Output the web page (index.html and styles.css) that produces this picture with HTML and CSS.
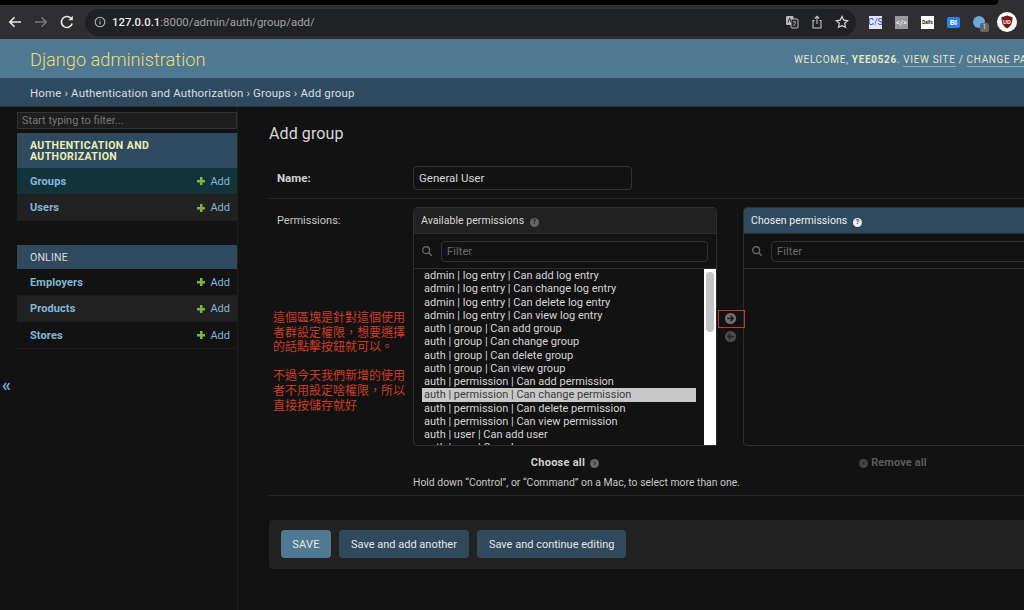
FILE: index.html
```html
<!DOCTYPE html>
<html lang="en">
<head>
<meta charset="utf-8">
<title>Add group | Django site admin</title>
<link rel="stylesheet" href="styles.css">
</head>
<body>
<div class="tabstrip"><div class="tabstrip-black"></div></div>
<div class="toolbar">
  <svg class="nav-ico" viewBox="0 0 16 16"><path d="M14 8H3M7.5 3.2 2.8 8l4.700 4.800" fill="none" stroke="#e8e8e8" stroke-width="1.600"/></svg>
  <svg class="nav-ico" viewBox="0 0 16 16"><path d="M2 8h11M8.500 3.200 13.200 8l-4.700 4.800" fill="none" stroke="#77797b" stroke-width="1.600"/></svg>
  <svg class="nav-ico" viewBox="0 0 16 16"><path d="M13.200 9.500A5.500 5.500 0 1 1 12 4.300" fill="none" stroke="#e8e8e8" stroke-width="1.600"/><path d="M13.800 1.800v4.400H9.400z" fill="#e8e8e8"/></svg>
  <div class="omnibox">
    <svg class="info-ico" viewBox="0 0 12 12"><circle cx="6" cy="6" r="4.800" fill="none" stroke="#b5b5b5" stroke-width="1.100"/><path d="M6 5.300v3.200M6 3.300v1" stroke="#b5b5b5" stroke-width="1.100"/></svg>
    <span class="url"><span class="url-host">127.0.0.1</span>:8000/admin/auth/group/add/</span>
    <div class="omni-actions">
      <svg class="omni-ico" viewBox="0 0 14 14"><rect x="1" y="1" width="7.500" height="9" rx="1" fill="#b8b8b8"/><rect x="6" y="4" width="7" height="9" rx="1" fill="#2a2a2c" stroke="#b8b8b8"/><path d="M8 7h3M9.500 6v1M8.500 11l2-3" stroke="#b8b8b8" fill="none" stroke-width=".8"/><path d="M3 7.500 4.700 3l1.500 4.500" stroke="#333" fill="none"/></svg>
      <svg class="omni-ico" viewBox="0 0 14 14"><path d="M4.500 5.500H3v7.500h8V5.500H9.500" fill="none" stroke="#c4c4c4" stroke-width="1.100"/><path d="M7 9V1.500M4.800 3.500 7 1.300l2.200 2.200" fill="none" stroke="#c4c4c4" stroke-width="1.100"/></svg>
      <svg class="omni-ico" viewBox="0 0 14 14"><path d="m7 1.500 1.700 3.600 3.900.5-2.900 2.700.8 3.900L7 10.700l-3.500 1.500.8-3.900L1.400 5.600l3.900-.5z" fill="none" stroke="#d6d6d6" stroke-width="1.200"/></svg>
    </div>
  </div>
  <div class="extensions">
    <span class="ext ext-cjs">C/S</span>
    <span class="ext ext-code">&lt;/&gt;</span>
    <span class="ext ext-dark">Dalfs</span>
    <span class="ext-bi">BI</span>
    <span class="ext-globe"><span class="ext-badge">1</span></span>
    <span class="ext-ublock"><svg viewBox="0 0 14 16" class="shield"><path d="M7 .5 13.500 2.500c0 6-1.500 10.500-6.500 13C2 13 .5 8.500.5 2.500z" fill="#7f1414"/></svg><span class="ud">UD</span></span>
    <span class="ext-dot"></span>
  </div>
</div>

<header class="site-header">
  <div class="branding">Django administration</div>
  <div class="user-tools">WELCOME, <strong>YEE0526</strong>. <a>VIEW SITE</a> / <a>CHANGE PASSWORD</a></div>
</header>
<nav class="breadcrumbs">Home › Authentication and Authorization › Groups › Add group</nav>

<div class="main">
  <aside class="sidebar">
    <div class="nav-filter">Start typing to filter...</div>
    <div class="app-caption app-caption-active">AUTHENTICATION AND AUTHORIZATION</div>
    <div class="model-row model-current"><span class="model-name">Groups</span><span class="add-link"><span class="plus"></span>Add</span></div>
    <div class="model-row model-alt"><span class="model-name">Users</span><span class="add-link"><span class="plus"></span>Add</span></div>
    <div class="app-caption app-caption-plain">ONLINE</div>
    <div class="model-row"><span class="model-name">Employers</span><span class="add-link"><span class="plus"></span>Add</span></div>
    <div class="model-row model-alt"><span class="model-name">Products</span><span class="add-link"><span class="plus"></span>Add</span></div>
    <div class="model-row"><span class="model-name">Stores</span><span class="add-link"><span class="plus"></span>Add</span></div>
    <div class="sidebar-toggle">«</div>
  </aside>

  <main class="content">
    <h1 class="page-title">Add group</h1>
    <div class="form-row name-row">
      <label class="name-label">Name:</label>
      <div class="name-input">General User</div>
    </div>
    <div class="form-row perm-row">
      <label class="perm-label">Permissions:</label>
      <div class="perm-body">
        <div class="selector">
          <div class="selector-box">
            <div class="selector-head">Available permissions <span class="help">?</span></div>
            <div class="selector-filter">
              <svg class="search-ico" viewBox="0 0 14 14"><circle cx="6" cy="6" r="4" fill="none" stroke="#666" stroke-width="1.600"/><path d="m9 9 3.500 3.500" stroke="#666" stroke-width="1.800"/></svg>
              <div class="filter-input">Filter</div>
            </div>
            <div class="list-wrap">
              <ul class="options">
                <li>admin | log entry | Can add log entry</li>
                <li>admin | log entry | Can change log entry</li>
                <li>admin | log entry | Can delete log entry</li>
                <li>admin | log entry | Can view log entry</li>
                <li>auth | group | Can add group</li>
                <li>auth | group | Can change group</li>
                <li>auth | group | Can delete group</li>
                <li>auth | group | Can view group</li>
                <li>auth | permission | Can add permission</li>
                <li class="selected">auth | permission | Can change permission</li>
                <li>auth | permission | Can delete permission</li>
                <li>auth | permission | Can view permission</li>
                <li>auth | user | Can add user</li>
                <li>auth | user | Can change user</li>
              </ul>
              <div class="scrollbar"><div class="scroll-thumb"></div></div>
            </div>
          </div>
          <div class="arrows">
            <span class="arrow-btn arrow-on"><svg viewBox="0 0 14 14"><circle cx="7" cy="7" r="6" fill="#6f6f6f"/><path d="M3.500 7h6M7 4l3 3-3 3" fill="none" stroke="#1c1c1c" stroke-width="1.500"/></svg></span>
            <span class="arrow-btn arrow-off"><svg viewBox="0 0 14 14"><circle cx="7" cy="7" r="6" fill="#4c4c4c"/><path d="M10.500 7h-6M7 4 4 7l3 3" fill="none" stroke="#222" stroke-width="1.500"/></svg></span>
          </div>
          <div class="selector-box selector-chosen">
            <div class="selector-head chosen-head">Chosen permissions <span class="help help-on">?</span></div>
            <div class="selector-filter">
              <svg class="search-ico" viewBox="0 0 14 14"><circle cx="6" cy="6" r="4" fill="none" stroke="#666" stroke-width="1.600"/><path d="m9 9 3.500 3.500" stroke="#666" stroke-width="1.800"/></svg>
              <div class="filter-input">Filter</div>
            </div>
            <div class="chosen-list"></div>
          </div>
        </div>
        <div class="choose-row">
          <span class="choose-all">Choose all <span class="mini-dot">›</span></span>
          <span class="remove-all"><span class="mini-dot mini-off">‹</span> Remove all</span>
        </div>
        <p class="help-text">Hold down “Control”, or “Command” on a Mac, to select more than one.</p>
      </div>
      <div class="note">這個區塊是針對這個使用<br>者群設定權限，想要選擇<br>的話點擊按鈕就可以。<br><br>不過今天我們新增的使用<br>者不用設定啥權限，所以<br>直接按儲存就好</div>
      <div class="red-box"></div>
    </div>
    <div class="submit-row">
      <button class="btn btn-save">SAVE</button>
      <button class="btn">Save and add another</button>
      <button class="btn">Save and continue editing</button>
    </div>
  </main>
</div>
</body>
</html>
```
FILE: styles.css
```css
* { box-sizing: border-box; }
html, body { margin: 0; height: 610px; overflow: hidden; }
body { width: 1024px; background: #121212; color: #ddd; font-family: Roboto, "Liberation Sans", sans-serif; font-size: 12px; }

.tabstrip { height: 5px; background: #2e2e30; }
.tabstrip-black { width: 998px; height: 5px; background: #000; border-bottom-right-radius: 4px; }
.toolbar { height: 34px; background: #2f2f31; display: flex; align-items: center; padding-left: 7px; }
.nav-ico { width: 16px; height: 16px; margin-right: 10px; flex: none; }
.omnibox { width: 771px; height: 27px; border-radius: 14px; background: #202124; display: flex; align-items: center; padding: 0 7px 0 9px; flex: none; }
.info-ico { width: 12px; height: 12px; margin-right: 6px; }
.url { font-size: 11.400px; color: #a0a2a4; }
.url-host { color: #eceded; font-weight: 500; }
.omni-actions { margin-left: auto; display: flex; gap: 11px; }
.omni-ico { width: 14px; height: 14px; }
.extensions { display: flex; align-items: center; margin-left: 13px; flex: none; }
.ext { width: 13px; height: 13px; margin-right: 13px; display: flex; align-items: center; justify-content: center; font-size: 8px; overflow: hidden; }
.ext-cjs { background: #dfe6f5; color: #3a44d8; font-size: 9px; }
.ext-code { background: #9a9a9e; color: #fff; }
.ext-dark { background: #fff; color: #111; font-size: 4.500px; font-weight: 700; }
.ext-bi { width: 13px; height: 11px; margin-right: 13px; border-radius: 2px; background: #2f80e8; color: #fff; font-size: 8px; font-weight: 700; text-align: center; line-height: 11px; }
.ext-globe { position: relative; width: 12px; height: 12px; margin-right: 12px; border-radius: 50%; background: #6ea7e0; }
.ext-badge { position: absolute; left: 7px; top: 7px; width: 9px; height: 9px; border-radius: 2px; background: #666; color: #ddd; font-size: 7px; line-height: 9px; text-align: center; }
.ext-ublock { position: relative; width: 20px; height: 20px; margin-right: 9px; border-radius: 50%; background: #fff; display: flex; align-items: center; justify-content: center; }
.shield { width: 12px; height: 14px; }
.ud { position: absolute; left: 0; right: 0; top: 6px; text-align: center; font-size: 6px; color: #eee; font-weight: 700; }
.ext-dot { width: 4px; height: 4px; border-radius: 50%; background: #ccc; flex: none; }

.site-header { height: 39px; background: #4f7893; display: flex; align-items: center; padding: 2px 0 0 30px; white-space: nowrap; overflow: hidden; }
.branding { font-size: 18.200px; font-weight: 300; color: #f0dc6e; }
.user-tools { margin-left: auto; flex: none; width: 230px; font-size: 10px; line-height: 18px; letter-spacing: .66px; color: #e6e7c4; overflow: hidden; }
.user-tools strong { font-weight: 700; }
.user-tools a { border-bottom: 1px solid #8fa9ba; padding-bottom: 1px; }
.breadcrumbs { height: 29px; background: #2f4a5e; border-bottom: 1px solid #26333d; padding-left: 30px; line-height: 30px; font-size: 11.500px; letter-spacing: .14px; color: #d5dde2; }

.main { display: flex; height: 503px; }
.sidebar { position: relative; width: 238px; flex: none; padding: 5px 0 0 17px; border-right: 1px solid #1f1f1f; }
.nav-filter { height: 17px; width: 220px; background: #1e1e1e; border: 1px solid #333; color: #777; font-size: 11px; line-height: 15px; padding-left: 4px; margin-bottom: 4px; }
.app-caption { width: 220px; background: #2f4a5e; padding: 0 13px; font-size: 10.500px; letter-spacing: .4px; }
.app-caption-active { height: 35px; padding-top: 7px; line-height: 11px; font-weight: 700; color: #eeeeb4; }
.app-caption-plain { height: 24px; margin-top: 24px; line-height: 25px; color: #ddd; font-weight: 400; letter-spacing: .2px; }
.model-row { width: 220px; height: 26.500px; display: flex; align-items: center; justify-content: space-between; padding: 1px 7px 0 13px; font-size: 11px; border-bottom: 1px solid #1c1c1c; }
.model-alt { background: #212121; }
.model-current { background: #13333a; }
.model-name { font-weight: 700; color: #81b7dc; letter-spacing: .1px; }
.add-link { display: flex; align-items: center; color: #81b7dc; }
.plus { width: 8px; height: 8px; margin-right: 5px; background: linear-gradient(#7fb53f, #7fb53f) center / 8px 2.500px no-repeat, linear-gradient(#7fb53f, #7fb53f) center / 2.500px 8px no-repeat; }
.sidebar-toggle { position: absolute; left: 2px; top: 266px; color: #6ea6cf; font-size: 18px; font-weight: 700; line-height: 24px; }

.content { flex: none; width: 790px; padding: 17px 0 0 31px; }
.page-title { margin: 0 0 22px; font-size: 16px; font-weight: 400; line-height: 20px; color: #d8d8d8; letter-spacing: .1px; }
.form-row { display: flex; }
.name-row { height: 33px; padding-left: 8px; border-bottom: 1px solid #262626; }
.name-label { width: 136px; flex: none; font-weight: 700; font-size: 11.500px; color: #d2d2d2; line-height: 24px; }
.name-input { width: 219px; height: 24px; border: 1px solid #333; border-radius: 4px; background: #121212; padding-left: 5px; line-height: 22px; font-size: 11.500px; color: #d8d8d8; }
.perm-row { position: relative; padding: 8px 0 0 8px; height: 297px; border-bottom: 1px solid #262626; }
.perm-label { width: 136px; flex: none; font-size: 11px; color: #c8c8c8; padding-top: 7px; }
.perm-body { flex: none; width: 640px; }
.selector { display: flex; height: 239px; }
.selector-box { width: 304px; flex: none; border: 1px solid #2e2e2e; border-radius: 4px 4px 0 4px; display: flex; flex-direction: column; overflow: hidden; }
.selector-chosen { width: 310px; }
.selector-head { height: 26px; flex: none; background: #212121; padding-left: 7px; line-height: 25px; font-size: 10.500px; letter-spacing: .05px; color: #d8d8d8; border-bottom: 1px solid #2e2e2e; }
.chosen-head { background: #2f4a5e; color: #eee; }
.help { display: inline-block; width: 9px; height: 9px; margin-left: 3px; border-radius: 50%; background: #666; color: #222; font-size: 7px; line-height: 9px; text-align: center; font-weight: 700; vertical-align: 0; }
.help-on { background: #eee; color: #2f4a5e; }
.selector-filter { height: 35px; flex: none; display: flex; align-items: center; padding: 0 8px 0 7px; border-bottom: 1px solid #2e2e2e; }
.search-ico { width: 12px; height: 12px; margin-right: 8px; flex: none; }
.filter-input { flex: 1; height: 21px; border: 1px solid #333; border-radius: 4px; padding-left: 5px; line-height: 19px; font-size: 11px; letter-spacing: .1px; color: #6c6c6c; }
.list-wrap { flex: 1; display: flex; min-height: 0; }
.options { flex: 1; list-style: none; margin: 0; padding: 0 8px; overflow: hidden; height: 177px; }
.options li { height: 13.250px; line-height: 13.250px; padding-left: 2px; font-size: 11px; color: #d5d5d5; white-space: nowrap; }
.options li.selected { background: #c8c8c8; color: #3a3a3a; }
.scrollbar { width: 12px; flex: none; background: #fff; padding: 3px 2px 0 2px; }
.scroll-thumb { height: 60px; border-radius: 4px; background: #c4c4c4; }
.chosen-list { flex: 1; }
.arrows { width: 25px; flex: none; display: flex; flex-direction: column; align-items: center; padding-top: 102px; margin-left: 1px; }
.arrow-btn { width: 15px; height: 18px; display: flex; align-items: center; justify-content: center; }
.arrow-btn svg { width: 13px; height: 13px; }
.choose-row { height: 28px; padding-top: 4px; display: flex; align-items: center; font-weight: 700; font-size: 11px; letter-spacing: .25px; }
.choose-all { width: 304px; text-align: center; color: #d0d0d0; }
.remove-all { margin-left: 20px; width: 310px; text-align: center; color: #5b5b5b; letter-spacing: .1px; }
.mini-dot { display: inline-block; width: 9px; height: 9px; border-radius: 50%; background: #666; color: #1c1c1c; font-size: 9px; line-height: 8px; text-align: center; margin-left: 2px; }
.mini-off { background: #444; }
.help-text { margin: 0; font-size: 10.400px; color: #c8c8c8; line-height: 13px; white-space: nowrap; padding-top: 1.500px; }
.note { position: absolute; left: 4px; top: 111px; width: 136px; font-family: "Noto Sans CJK TC", sans-serif; font-size: 12px; line-height: 14.600px; color: #cf3b25; white-space: nowrap; }
.red-box { position: absolute; left: 449px; top: 111px; width: 27px; height: 18px; border: 1px solid #c93a22; }
.submit-row { margin-top: 24px; height: 49px; width: 760px; background: #212121; border-radius: 4px; padding: 10px 12px; display: flex; gap: 8px; }
.btn { height: 28px; border: 0; border-radius: 4px; background: #2f4a5e; color: #e6e6e6; font-family: Roboto, "Liberation Sans", sans-serif; font-size: 11px; padding: 0 12px; }
.btn-save { background: #4f7893; width: 50px; padding: 0; letter-spacing: .3px; }
```
